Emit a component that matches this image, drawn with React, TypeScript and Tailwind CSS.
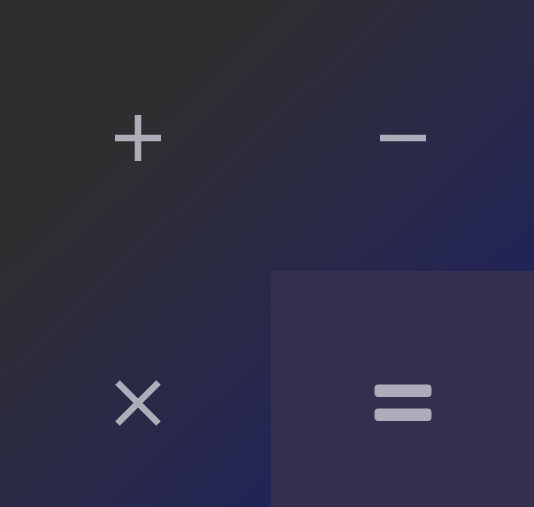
import React from "react";

const iconColor = "#adacb9";

function Plus() {
  return (
    <svg width="46" height="46" viewBox="0 0 46 46" aria-label="plus">
      <rect x="19.75" y="0" width="6.5" height="46" fill={iconColor} />
      <rect x="0" y="19.75" width="46" height="6.5" fill={iconColor} />
    </svg>
  );
}

function Minus() {
  return (
    <svg width="46" height="46" viewBox="0 0 46 46" aria-label="minus">
      <rect x="0" y="19.75" width="46" height="6.5" fill={iconColor} />
    </svg>
  );
}

function Times() {
  return (
    <svg width="46" height="46" viewBox="0 0 46 46" aria-label="times">
      <path d="M2.5 2.5 L43.5 43.5 M43.5 2.5 L2.5 43.5" stroke={iconColor} strokeWidth="6.5" strokeLinecap="butt" fill="none" />
    </svg>
  );
}

function Equals() {
  return (
    <svg width="58" height="38" viewBox="0 0 58 38" aria-label="equals">
      <rect x="0.5" y="0.5" width="57" height="12.5" rx="4" fill={iconColor} />
      <rect x="0.5" y="24.5" width="57" height="12.5" rx="4" fill={iconColor} />
    </svg>
  );
}

export default function App() {
  return (
    <div className="w-[534px] h-[507px] overflow-hidden bg-gradient-to-br from-[#2e2e30] from-25% via-[#2b2a45] via-50% to-[#1c1866] to-100%">
      <div className="grid grid-cols-[271px_263px] grid-rows-[271px_236px] h-full">
        <button className="flex items-center justify-center pl-[5px] pt-[5px]">
          <Plus />
        </button>
        <button className="flex items-center justify-center pl-[1px] pt-[5px]">
          <Minus />
        </button>
        <button className="flex items-center justify-center pl-[5px] pt-[28px]">
          <Times />
        </button>
        <button className="flex items-center justify-center bg-[#33314f] pl-[1px] pt-[28px]">
          <Equals />
        </button>
      </div>
    </div>
  );
}
